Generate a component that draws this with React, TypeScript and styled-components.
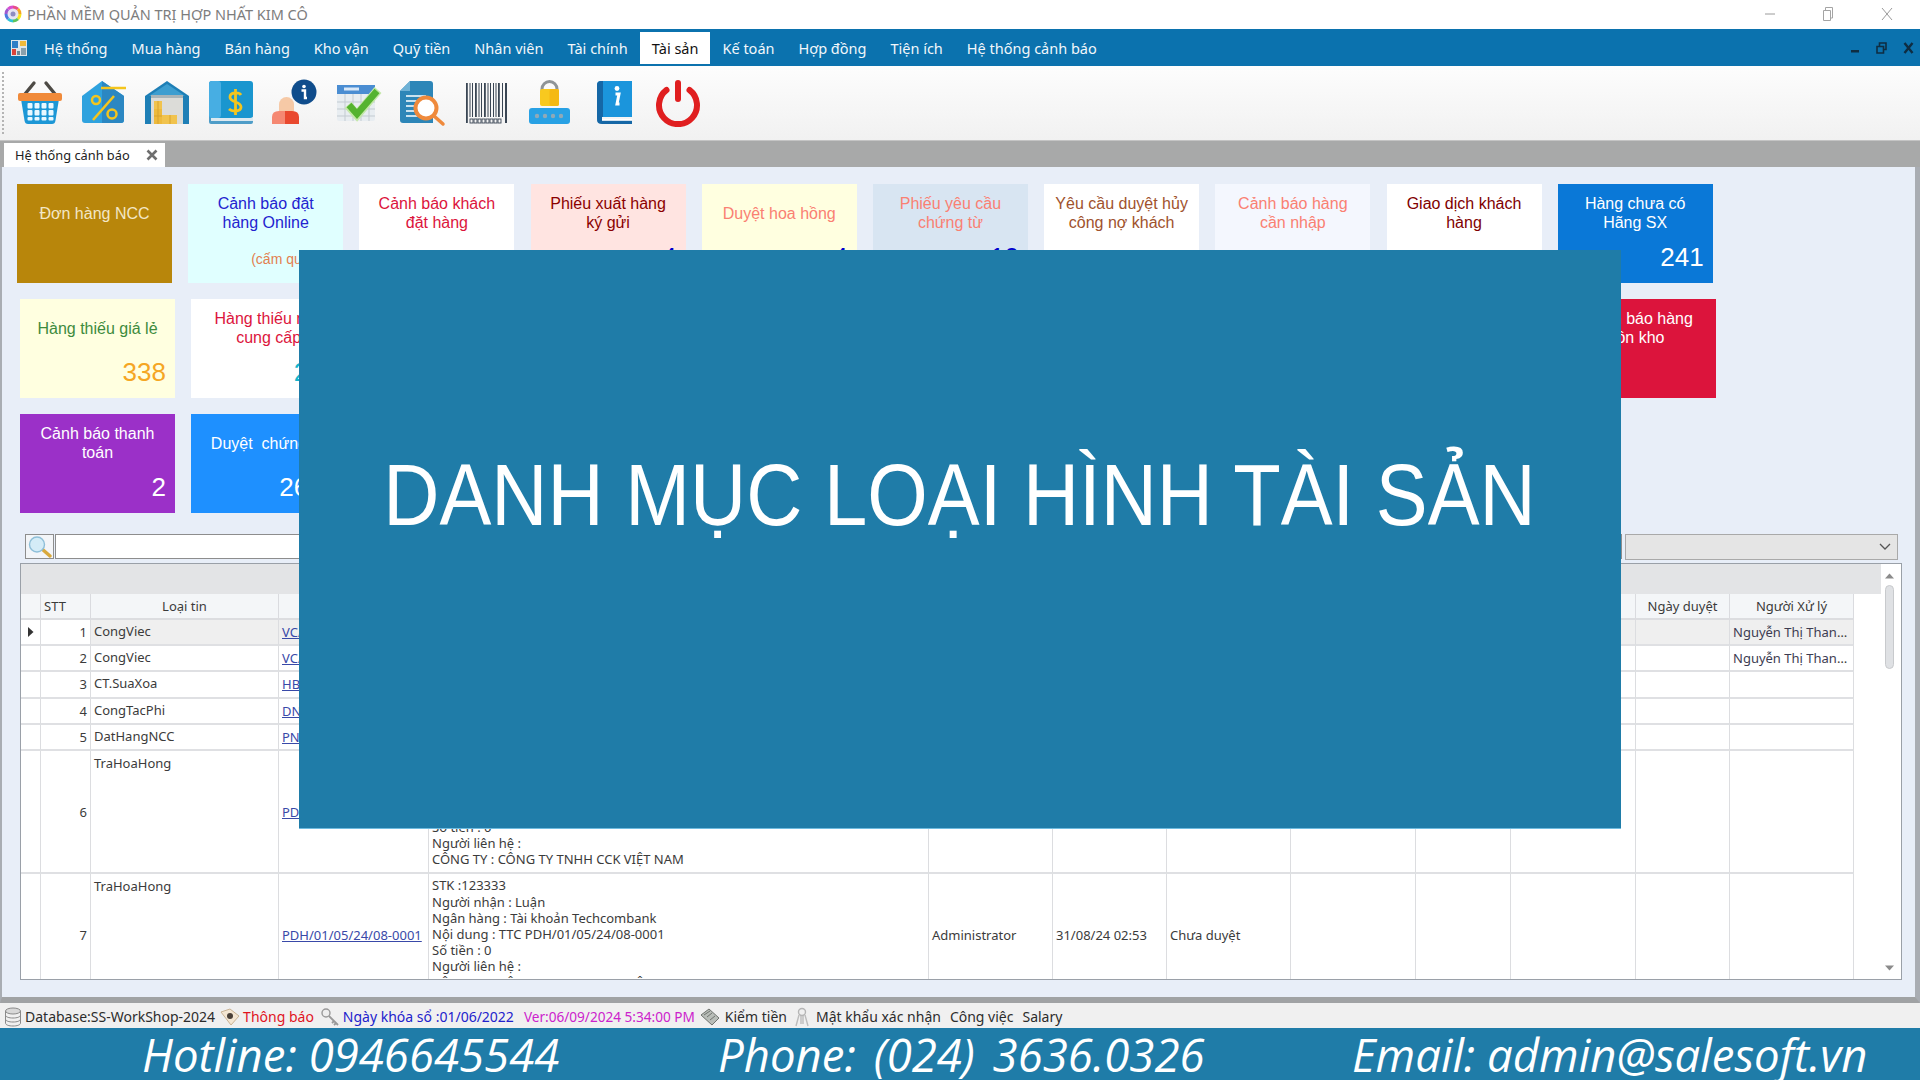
import React from "react";
import styled, { createGlobalStyle } from "styled-components";

const Global = createGlobalStyle`
  html, body { margin: 0; padding: 0; background: #fff; overflow: hidden; }
  * { box-sizing: border-box; }
`;

const Page = styled.div`
  position: relative;
  width: 1920px;
  height: 1080px;
  overflow: hidden;
  display: flex;
  flex-direction: column;
  font-family: "Noto Sans", "Liberation Sans", sans-serif;
`;

const TitleBar = styled.div`
  height: 29px;
  flex: none;
  background: #fff;
  display: flex;
  align-items: center;
  padding: 0 0 2px 4px;
  color: #7d7d7d;
  font-size: 14.5px;
`;
const TitleText = styled.span`
  margin-left: 5px;
  flex: 1;
`;
const WinButtons = styled.div`
  display: flex;
  align-items: center;
  gap: 46px;
  padding-right: 26px;
`;

const MenuBar = styled.nav`
  height: 37px;
  flex: none;
  background: #0b72ae;
  display: flex;
  align-items: center;
  padding: 0 6px 0 10px;
`;
const MenuItem = styled.div<{ $active?: boolean }>`
  height: 32px;
  margin-top: 1px;
  display: flex;
  align-items: center;
  padding: 0 12px;
  font-size: 14.5px;
  color: ${(p) => (p.$active ? "#111" : "#f2f7fb")};
  background: ${(p) => (p.$active ? "#fff" : "transparent")};
`;
const MenuLogo = styled.div`
  width: 18px;
  height: 18px;
  margin-right: 4px;
  flex: none;
`;
const MenuSpacer = styled.div`
  flex: 1;
`;
const MdiButtons = styled.div`
  display: flex;
  gap: 16px;
  align-items: center;
`;

const Toolbar = styled.div`
  height: 75px;
  flex: none;
  background: linear-gradient(#fdfdfd, #f1f1f1);
  border-bottom: 1px solid #c4c4c4;
  display: flex;
  align-items: center;
  padding-left: 2px;
`;
const Grip = styled.div`
  width: 2px;
  height: 62px;
  margin-right: 4px;
  border-left: 2px dotted #b4b4b4;
`;
const ToolButton = styled.div`
  width: 63.8px;
  display: flex;
  justify-content: center;
  flex: none;
`;

const TabStrip = styled.div`
  height: 26px;
  flex: none;
  background: #a8a9a9;
  padding: 2px 0 0 4px;
  display: flex;
`;
const Tab = styled.div`
  width: 161px;
  background: #fff;
  display: flex;
  align-items: center;
  justify-content: space-between;
  padding: 0 7px 0 11px;
  font-size: 12.8px;
  color: #222;
`;

const Content = styled.main`
  flex: 1;
  min-height: 0;
  background: #e8eef8;
  border-left: 2px solid #a9adb3;
  border-right: 5px solid #a9adb3;
  border-bottom: 6px solid #a0a2a4;
  padding-top: 17px;
  display: flex;
  flex-direction: column;
`;
const TileRow = styled.div<{ $left: number }>`
  display: grid;
  grid-template-columns: repeat(10, 155px);
  column-gap: 16.2px;
  margin-left: ${(p) => p.$left}px;
  margin-bottom: 16px;
  height: 99px;
`;
const Tile = styled.div<{ $bg: string; $fg: string; $col?: number }>`
  position: relative;
  background: ${(p) => p.$bg};
  color: ${(p) => p.$fg};
  grid-column: ${(p) => p.$col ?? "auto"};
  font-family: "Liberation Sans", Arial, sans-serif;
  font-size: 16px;
  line-height: 19px;
  text-align: center;
  display: flex;
  flex-direction: column;
`;
const TileTitle = styled.div`
  height: 58px;
  padding: 0 4px;
  display: flex;
  align-items: center;
  justify-content: center;
  white-space: pre-line;
`;
const TileValue = styled.div<{ $fg: string }>`
  color: ${(p) => p.$fg};
  font-size: 26px;
  line-height: 30px;
  text-align: right;
  padding-right: 9px;
`;
const TileNote = styled.div`
  color: #e2804f;
  font-size: 14px;
  line-height: 18px;
  text-align: left;
  white-space: nowrap;
  padding-left: 63px;
  margin-top: 8px;
`;

const SearchRow = styled.div`
  height: 26px;
  margin: 5px 17px 3px 23px;
  display: flex;
  gap: 1px;
`;
const SearchButton = styled.div`
  width: 29px;
  height: 25px;
  border: 1px solid #8d8d8d;
  background: #f3f5f8;
  flex: none;
  display: flex;
  align-items: center;
  justify-content: center;
`;
const SearchInput = styled.div`
  flex: 1;
  height: 25px;
  border: 1px solid #8d8d8d;
  background: #fff;
`;
const Combo = styled.div`
  width: 273px;
  margin-left: 2px;
  flex: none;
  background: #e5e5e5;
  border: 1px solid #a9a9a9;
  display: flex;
  align-items: center;
  justify-content: flex-end;
  padding-right: 5px;
`;

const GridBox = styled.section`
  height: 417px;
  margin: 0 13px 0 18px;
  border: 1px solid #9aa0a8;
  background: #fff;
  display: flex;
  overflow: hidden;
`;
const GridBody = styled.div`
  flex: 1;
  min-width: 0;
  overflow: hidden;
`;
const GroupPanel = styled.div`
  height: 30px;
  background: #e3e4e6;
`;
const Table = styled.table`
  table-layout: fixed;
  border-collapse: separate;
  border-spacing: 0;
  width: 1833px;
  font-size: 13px;
  color: #3b3b3b;
`;
const Th = styled.th`
  height: 26px;
  padding: 0 3px;
  font-weight: 400;
  text-align: center;
  background: #f4f6f8;
  border-right: 1px solid #dadbdf;
  border-bottom: 2px solid #dcdde0;
  overflow: hidden;
  white-space: nowrap;
`;
const ThLeft = styled(Th)`
  text-align: left;
`;
const Td = styled.td<{ $sel?: boolean }>`
  height: 26.2px;
  padding: 0 3px;
  background: ${(p) => (p.$sel ? "#efefef" : "#fff")};
  border-right: 1px solid #dcdde0;
  border-bottom: 2px solid #dfe0e3;
  overflow: hidden;
  white-space: nowrap;
  text-overflow: ellipsis;
  vertical-align: middle;
`;
const TdIndicator = styled(Td)`
  padding: 0 0 0 7px;
  background: #fff;
`;
const TdNumber = styled(Td)`
  text-align: right;
  background: #fff;
`;
const TdName = styled(Td)<{ $tall?: boolean }>`
  vertical-align: top;
  padding-top: ${(p) => (p.$tall ? 3 : 2)}px;
`;
const TdLines = styled(Td)`
  vertical-align: top;
`;
const Lines = styled.div`
  line-height: 16.2px;
  white-space: pre-line;
  padding: 3px 0 5px;
`;
const CellLink = styled.a`
  color: #3949a8;
  text-decoration: underline;
`;
const Person = styled.span`
  color: #3c3c52;
`;

const Scrollbar = styled.div`
  width: 20px;
  flex: none;
  background: #fff;
  display: flex;
  flex-direction: column;
  align-items: center;
  padding: 9px 4px 0 0;
`;
const ScrollThumb = styled.div`
  width: 9px;
  height: 84px;
  margin-top: 6px;
  background: #dfe1e4;
  border: 1px solid #c8cacd;
  border-radius: 5px;
  flex: none;
`;
const ScrollGap = styled.div`
  flex: 1;
`;
const ScrollDown = styled.div`
  margin-bottom: 8px;
  line-height: 0;
`;

const StatusBar = styled.div`
  height: 25px;
  flex: none;
  background: #f0f0f0;
  display: flex;
  align-items: center;
  padding: 2px 0 0 4px;
  font-size: 14px;
  white-space: nowrap;
`;
const StatusItem = styled.span<{ $fg?: string; $gap?: number; $size?: number }>`
  color: ${(p) => p.$fg ?? "#2c2c2c"};
  margin-right: ${(p) => p.$gap ?? 5}px;
  font-size: ${(p) => p.$size ?? 14}px;
  display: inline-flex;
  align-items: center;
`;
const SmallIcon = styled.span<{ $mr?: number }>`
  display: inline-flex;
  margin-right: ${(p) => p.$mr ?? 3}px;
  flex: none;
`;

const Footer = styled.footer`
  height: 52px;
  flex: none;
  background: #1f7ca8;
  color: #fff;
  font-size: 45.5px;
  font-style: italic;
  font-family: "Open Sans", "Noto Sans", sans-serif;
  display: flex;
  align-items: center;
  padding-left: 142px;
  white-space: nowrap;
`;
const FooterItem = styled.span<{ $w: number; $ws?: number }>`
  width: ${(p) => p.$w}px;
  word-spacing: ${(p) => p.$ws ?? 0}px;
  flex: none;
`;

const Overlay = styled.div`
  position: absolute;
  left: 299px;
  top: 250px;
  width: 1322px;
  height: 579px;
  background: #1f7ca8;
  color: #fff;
  font-family: "Liberation Sans", Arial, sans-serif;
  font-size: 87px;
  display: flex;
  align-items: center;
  justify-content: center;
  white-space: nowrap;
  padding-bottom: 88px;
  border-bottom: 1px solid #6fbbdf;
`;
const OverlayTitle = styled.span`
  display: inline-block;
  transform: scaleX(0.894);
`;

/* ---------- icons ---------- */
const Svg = ({ s = 48, children }: { s?: number; children: React.ReactNode }) => (
  <svg width={s} height={s} viewBox={`0 0 ${s} ${s}`} style={{ display: "block" }}>
    {children}
  </svg>
);

const Basket = () => (
  <Svg>
    <path d="M18 4L9 15M30 4l9 11" stroke="#4d4a45" strokeWidth="3.4" strokeLinecap="round" />
    <path d="M5 20h38l-3.600 22q-.5 3-3.400 3H12q-2.900 0-3.400-3z" fill="#1c97d6" />
    <rect x="2" y="14" width="44" height="8" rx="2" fill="#f08a3a" />
    {[24, 31, 38].map((y) =>
      [11.5, 18.5, 25.5, 32.5].map((x) => (
        <rect key={`${x}-${y}`} x={x} y={y} width="5" height={y === 38 ? 3.5 : 5.5} rx="1" fill="#e9f8ff" />
      ))
    )}
  </Svg>
);
const TagIcon = () => (
  <Svg>
    <path d="M2 17L22 2l22 15v24q0 3-3 3H5q-3 0-3-3z" fill="#2fa2de" />
    <path d="M22 2l22 15v24q0 3-3 3H22z" fill="#2b87c2" />
    <path d="M21 9h25" stroke="#f4c51d" strokeWidth="2.5" />
    <circle cx="16" cy="21" r="4" fill="none" stroke="#f4c51d" strokeWidth="2.5" />
    <circle cx="32" cy="35" r="4.5" fill="none" stroke="#f4c51d" strokeWidth="2.5" />
    <path d="M34 17L13 41" stroke="#f4c51d" strokeWidth="2.5" />
  </Svg>
);
const Warehouse = () => (
  <Svg>
    <path d="M2 17L24 2l22 15v28H2z" fill="#1e7fb6" />
    <path d="M6 17L24 5l18 12z" fill="#3d9ed0" />
    <rect x="8" y="16" width="32" height="29" fill="#dcdcd8" />
    <rect x="8" y="16" width="32" height="3" fill="#a9b4b8" />
    <rect x="11" y="22" width="8" height="8" fill="#f1c34d" />
    <rect x="11" y="30" width="8" height="15" fill="#eeba3c" />
    <rect x="19" y="36" width="15" height="9" fill="#f1c34d" />
    <path d="M15 22v23M27 36v9M11 37h8" stroke="#d7a22e" strokeWidth="1" />
  </Svg>
);
const BookMoney = () => (
  <Svg>
    <rect x="2" y="36" width="44" height="9" rx="2" fill="#4f9dc8" />
    <rect x="4" y="38" width="42" height="4" fill="#dce9f0" />
    <rect x="2" y="2" width="44" height="37" rx="3" fill="#1a96cf" />
    <rect x="2" y="2" width="12" height="37" rx="3" fill="#47aee3" />
    <path d="M34 16c-2-3-11-3-11 2 0 6 11 4 11 10 0 5-9 5-12 2M28.5 10v26" fill="none" stroke="#f4c51d" strokeWidth="2.800" />
  </Svg>
);
const PersonInfo = () => (
  <Svg>
    <rect x="8" y="18" width="15" height="21" rx="7.5" fill="#f6c9a6" />
    <path d="M1 45v-7q0-6 7-6h6v13z" fill="#f58872" />
    <path d="M14 32h7q7 0 7 6v7H14z" fill="#e9492f" />
    <circle cx="33" cy="13" r="12.5" fill="#104d8c" />
    <circle cx="33" cy="7.5" r="1.800" fill="#fff" />
    <path d="M30.5 11.5h3.500v7.500h2" fill="none" stroke="#fff" strokeWidth="2.400" />
  </Svg>
);
const CalendarCheck = () => (
  <Svg>
    <rect x="2" y="6" width="38" height="36" rx="2" fill="#e8edf1" />
    <rect x="2" y="6" width="38" height="9" fill="#4a8dd2" />
    <rect x="9" y="8.5" width="15" height="3" fill="#d9e8f7" />
    <path d="M2 23h38M2 30h38M2 37h38M10 15v27M18 15v27M26 15v27M34 15v27" stroke="#c3cbd1" strokeWidth="1" />
    <path d="M13 26l9 10L43 11" fill="none" stroke="#c4e8a8" strokeWidth="9" />
    <path d="M14 26l8 9L42 12" fill="none" stroke="#55b330" strokeWidth="6.500" />
  </Svg>
);
const DocSearch = () => (
  <Svg>
    <path d="M1 12L11 2h20q3 0 3 3v39H4q-3 0-3-3z" fill="#2d86b8" />
    <path d="M1 12L11 2v10z" fill="#6fb2d6" />
    <path d="M7 17h20M7 22h14M7 27h12M7 32h12M7 37h14" stroke="#c9e2ef" strokeWidth="1.800" />
    <circle cx="27" cy="29" r="10.5" fill="#fff" stroke="#ef8a3c" strokeWidth="4" />
    <path d="M35 37l9 8" stroke="#ef8a3c" strokeWidth="3.500" strokeLinecap="round" />
  </Svg>
);
const Barcode = () => {
  const bars: [number, number][] = [
    [4, 1.8], [7.5, 1], [10, 1], [13, 1.8], [16.5, 1], [19, 1], [22, 1.8], [25.5, 1],
    [28, 1], [31, 1], [33.5, 1], [36, 1.8], [40, 1], [43, 2],
  ];
  return (
    <Svg>
      {bars.map(([x, w], i) => (
        <rect key={x} x={x} y="4" width={w} height={i === 0 || i === 13 ? 40 : 34} fill="#3a4654" />
      ))}
      {[8, 12, 16, 20, 24, 28, 32, 36].map((x) => (
        <rect key={x} x={x} y="40" width="3" height="4" fill="none" stroke="#3a4654" strokeWidth="0.900" />
      ))}
    </Svg>
  );
};
const LockIcon = () => (
  <Svg>
    <path d="M16 13V10a7.5 7.5 0 0 1 15 0v3" fill="none" stroke="#8f9497" strokeWidth="3" />
    <rect x="14" y="10" width="19" height="17" rx="2" fill="#f8c91f" />
    <rect x="23.5" y="10" width="9.5" height="17" rx="2" fill="#f5b912" />
    <rect x="3" y="29" width="41" height="16" rx="3" fill="#28a1e4" />
    {[11, 19, 27, 35].map((x) => (
      <circle key={x} cx={x} cy="37" r="2.200" fill="#8fa9b8" />
    ))}
  </Svg>
);
const BookInfo = () => (
  <Svg>
    <path d="M7 6q0-4 4-4h31v36H12q-5 0-5 4z" fill="#1b95dc" />
    <path d="M7 6q0-4 4-4h2v36h-1q-5 0-5 4z" fill="#1567a6" />
    <path d="M7 41q0-4 5-4v3h30v5H12q-5 0-5-4z" fill="#1567a6" />
    <rect x="12" y="40" width="30" height="1.800" fill="#fff" />
    <circle cx="27" cy="9.5" r="2.400" fill="#fff" />
    <path d="M25.5 15h3.500l-2 10h2.500" fill="none" stroke="#fff" strokeWidth="3" />
  </Svg>
);
const Power = () => (
  <Svg>
    <path d="M12.5 11A19 19 0 1 0 35.5 11" fill="none" stroke="#e01f20" strokeWidth="6" strokeLinecap="round" />
    <path d="M24 4v16" stroke="#e01f20" strokeWidth="6" strokeLinecap="round" />
  </Svg>
);

const AppLogo = () => (
  <svg width="18" height="18" viewBox="0 0 18 18">
    {["#e84d8a", "#f5a623", "#f8e71c", "#5cc45c", "#2ec4d6", "#4a7be0", "#9b59d0", "#d84dd0"].map((c, i) => (
      <path key={c} d="M9 0.500a8.500 8.500 0 0 1 6 2.500L9 9z" fill={c} transform={`rotate(${i * 45} 9 9)`} />
    ))}
    <circle cx="9" cy="9" r="5.500" fill="#e6e4f2" />
    <circle cx="9" cy="9" r="2.500" fill="#8e8cc0" />
  </svg>
);
const MenuGlyph = () => (
  <svg width="18" height="18" viewBox="0 0 18 18" style={{ display: "block" }}>
    <rect x="1" y="1" width="16" height="16" fill="#dfe6ea" />
    <rect x="2" y="2" width="6" height="7" fill="#2f7ec6" />
    <rect x="10" y="2" width="6" height="5" fill="#f0b93a" />
    <rect x="2" y="10" width="4" height="6" fill="#d9443a" />
    <rect x="7" y="12" width="3" height="4" fill="#6d8a98" />
    <rect x="11" y="9" width="5" height="7" fill="#8aa0ac" />
  </svg>
);
const WinMin = () => (
  <svg width="12" height="12" viewBox="0 0 12 12"><path d="M1 6h10" stroke="#9a9a9a" /></svg>
);
const WinRestore = () => (
  <svg width="12" height="14" viewBox="0 0 12 14">
    <path d="M1.500 3.500h7v10h-7zM3.500 3V.5h7V11H9" fill="none" stroke="#a4a4a4" />
  </svg>
);
const WinClose = () => (
  <svg width="14" height="14" viewBox="0 0 14 14"><path d="M2 1l10 12M12 1L2 13" stroke="#9a9a9a" /></svg>
);
const MdiMin = () => (
  <svg width="9" height="10" viewBox="0 0 9 10"><rect x="0" y="7" width="8" height="2.500" fill="#0f2d42" /></svg>
);
const MdiRestore = () => (
  <svg width="11" height="12" viewBox="0 0 11 12">
    <path d="M1 4.500h6.500v6.500H1zM3.500 4V1H10v6.500H8" fill="none" stroke="#0f2d42" strokeWidth="1.600" />
  </svg>
);
const MdiClose = () => (
  <svg width="11" height="12" viewBox="0 0 11 12"><path d="M1.500 1l8 10M9.500 1l-8 10" stroke="#0f2d42" strokeWidth="2.400" /></svg>
);
const TabClose = () => (
  <svg width="12" height="12" viewBox="0 0 12 12"><path d="M1.500 1.500l9 9M10.500 1.500l-9 9" stroke="#6e6e6e" strokeWidth="2.600" /></svg>
);
const Magnifier = () => (
  <svg width="26" height="22" viewBox="0 0 26 22">
    <path d="M15 13l8 7" stroke="#d9a93c" strokeWidth="3.400" strokeLinecap="round" />
    <circle cx="10" cy="8.500" r="7.500" fill="#d4ecf7" stroke="#8fbfd8" strokeWidth="1.400" />
  </svg>
);
const Chevron = () => (
  <svg width="14" height="10" viewBox="0 0 14 10"><path d="M2 2l5 5 5-5" fill="none" stroke="#555" strokeWidth="1.300" /></svg>
);
const ArrowUp = () => (
  <svg width="9" height="6" viewBox="0 0 9 6" style={{ flex: "none" }}><path d="M4.500 0.500L9 5.500H0z" fill="#8b8b8b" /></svg>
);
const ArrowDown = () => (
  <svg width="9" height="6" viewBox="0 0 9 6"><path d="M4.500 5.500L9 0.500H0z" fill="#8b8b8b" /></svg>
);
const RowMark = () => (
  <svg width="6" height="10" viewBox="0 0 6 10"><path d="M0 0l5.500 5L0 10z" fill="#333" /></svg>
);
const DbIcon = () => (
  <svg width="18" height="20" viewBox="0 0 18 20">
    <ellipse cx="9" cy="4" rx="7.500" ry="3" fill="#d8d8d8" stroke="#8a8a8a" />
    <path d="M1.500 4v12c0 2 3.500 3 7.500 3s7.500-1 7.500-3V4M1.500 8c0 2 3.500 3 7.500 3s7.500-1 7.500-3M1.500 12c0 2 3.500 3 7.500 3s7.500-1 7.500-3" fill="none" stroke="#8a8a8a" />
  </svg>
);
const NoticeIcon = () => (
  <svg width="20" height="20" viewBox="0 0 20 20">
    <path d="M1 5l9-3 9 7-8 9z" fill="#f4e6d2" stroke="#c9b394" />
    <circle cx="10" cy="9" r="3" fill="#4a4038" />
  </svg>
);
const KeyIcon = () => (
  <svg width="20" height="20" viewBox="0 0 20 20">
    <circle cx="6" cy="6" r="4" fill="#eee" stroke="#999" strokeWidth="1.400" />
    <path d="M9 9l9 9M14 14l-2 2M16 16l-2 2" stroke="#999" strokeWidth="1.800" />
  </svg>
);
const CashIcon = () => (
  <svg width="20" height="20" viewBox="0 0 20 20">
    <path d="M1 8l8-6 10 9-7 7z" fill="#b8bdb8" stroke="#6f736f" />
    <path d="M4 8l6-4M7 10l5-4M10 13l5-4" stroke="#6f736f" />
  </svg>
);
const PassIcon = () => (
  <svg width="14" height="20" viewBox="0 0 14 20">
    <circle cx="7" cy="5" r="3.500" fill="none" stroke="#b5b5b5" strokeWidth="1.400" />
    <path d="M4 8L1 19M10 8l3 11M6 9v8M8 9v8" stroke="#bcbcbc" strokeWidth="1.400" />
  </svg>
);

/* ---------- data ---------- */
const tools = [Basket, TagIcon, Warehouse, BookMoney, PersonInfo, CalendarCheck, DocSearch, Barcode, LockIcon, BookInfo, Power];
const menus = ["Hệ thống", "Mua hàng", "Bán hàng", "Kho vận", "Quỹ tiền", "Nhân viên", "Tài chính", "Tài sản", "Kế toán", "Hợp đồng", "Tiện ích", "Hệ thống cảnh báo"];

type TileData = { t: string; bg: string; fg: string; v?: string; vc?: string; note?: string; col?: number };
const row1: TileData[] = [
  { t: "Đơn hàng NCC", bg: "#b8860b", fg: "#f3e7c6" },
  { t: "Cảnh báo đặt\nhàng Online", bg: "#e0ffff", fg: "#2323cf", note: "(cấm qua ngày)" },
  { t: "Cảnh báo khách\nđặt hàng", bg: "#ffffff", fg: "#dc143c" },
  { t: "Phiếu xuất hàng\nký gửi", bg: "#ffe4e1", fg: "#8b0000", v: "4", vc: "#0000cd" },
  { t: "Duyệt hoa hồng", bg: "#ffffe0", fg: "#fa8072", v: "4", vc: "#0000cd" },
  { t: "Phiếu yêu cầu\nchứng từ", bg: "#d8e5f2", fg: "#fa8072", v: "10", vc: "#0000cd" },
  { t: "Yêu cầu duyệt hủy\ncông nợ khách", bg: "#ffffff", fg: "#a0522d" },
  { t: "Cảnh báo hàng\ncần nhập", bg: "#f4f7fe", fg: "#fa8072" },
  { t: "Giao dịch khách\nhàng", bg: "#ffffff", fg: "#800000" },
  { t: "Hàng chưa có\nHãng SX", bg: "#0a78d7", fg: "#fff", v: "241", vc: "#fff" },
];
const row2: TileData[] = [
  { t: "Hàng thiếu giá lẻ", bg: "#ffffe0", fg: "#3d8b3d", v: "338", vc: "#f5a623" },
  { t: "Hàng thiếu nhà\ncung cấp", bg: "#ffffff", fg: "#dc143c", v: "215", vc: "#12b5cb" },
  { t: "Cảnh báo hàng\ntồn kho", bg: "#dc143c", fg: "#fff", col: 10 },
];
const row3: TileData[] = [
  { t: "Cảnh báo thanh\ntoán", bg: "#9b30c8", fg: "#fff", v: "2", vc: "#fff" },
  { t: "Duyệt\u00a0 chứng từ", bg: "#1e90ff", fg: "#fff", v: "2612", vc: "#fff" },
];

const widths = [20, 50, 188, 150, 500, 124, 114, 124, 125, 95, 125, 94, 124];
const heads = ["", "STT", "Loại tin", "Số chứng từ", "Nội dung", "Người tạo", "Ngày tạo", "Trạng thái", "Người duyệt", "Cấp duyệt", "Ghi chú", "Ngày duyệt", "Người Xử lý"];

const simple = [
  ["CongViec", "VC/01/08/24-0001", "Nguyễn Thị Thanh Hà"],
  ["CongViec", "VC/01/08/24-0002", "Nguyễn Thị Thanh Hà"],
  ["CT.SuaXoa", "HBL/01/08/24-0003", ""],
  ["CongTacPhi", "DNT/01/08/24-0001", ""],
  ["DatHangNCC", "PNK/01/08/24-0001", ""],
];
const bank = `STK :123333
Người nhận : Luận
Ngân hàng : Tài khoản Techcombank
Nội dung : TTC PDH/01/05/24/08-0001
Số tiền : 0
Người liên hệ :
CÔNG TY : CÔNG TY TNHH CCK VIỆT NAM`;

const renderTile = (d: TileData) => (
  <Tile key={d.t} $bg={d.bg} $fg={d.fg} $col={d.col}>
    <TileTitle>{d.t}</TileTitle>
    {d.note && <TileNote>{d.note}</TileNote>}
    {d.v && <TileValue $fg={d.vc ?? d.fg}>{d.v}</TileValue>}
  </Tile>
);

export default function App() {
  return (
    <Page>
      <Global />
      <TitleBar>
        <AppLogo />
        <TitleText>PHẦN MỀM QUẢN TRỊ HỢP NHẤT KIM CÔ</TitleText>
        <WinButtons>
          <WinMin />
          <WinRestore />
          <WinClose />
        </WinButtons>
      </TitleBar>
      <MenuBar>
        <MenuLogo>
          <MenuGlyph />
        </MenuLogo>
        {menus.map((m) => (
          <MenuItem key={m} $active={m === "Tài sản"}>
            {m}
          </MenuItem>
        ))}
        <MenuSpacer />
        <MdiButtons>
          <MdiMin />
          <MdiRestore />
          <MdiClose />
        </MdiButtons>
      </MenuBar>
      <Toolbar>
        <Grip />
        {tools.map((T, i) => (
          <ToolButton key={i}>
            <T />
          </ToolButton>
        ))}
      </Toolbar>
      <TabStrip>
        <Tab>
          Hệ thống cảnh báo
          <TabClose />
        </Tab>
      </TabStrip>
      <Content>
        <TileRow $left={15}>{row1.map(renderTile)}</TileRow>
        <TileRow $left={18}>{row2.map(renderTile)}</TileRow>
        <TileRow $left={18}>{row3.map(renderTile)}</TileRow>
        <SearchRow>
          <SearchButton>
            <Magnifier />
          </SearchButton>
          <SearchInput />
          <Combo>
            <Chevron />
          </Combo>
        </SearchRow>
        <GridBox>
          <GridBody>
            <GroupPanel />
            <Table>
              <colgroup>
                {widths.map((w, i) => (
                  <col key={i} style={{ width: w }} />
                ))}
              </colgroup>
              <thead>
                <tr>
                  {heads.map((h, i) => (i === 1 ? <ThLeft key={i}>{h}</ThLeft> : <Th key={i}>{h}</Th>))}
                </tr>
              </thead>
              <tbody>
                {simple.map(([type, code, person], i) => (
                  <tr key={i}>
                    <TdIndicator>{i === 0 && <RowMark />}</TdIndicator>
                    <TdNumber>{i + 1}</TdNumber>
                    <TdName $sel={i === 0}>{type}</TdName>
                    <Td $sel={i === 0}>
                      <CellLink>{code}</CellLink>
                    </Td>
                    {widths.slice(4, 12).map((_, c) => (
                      <Td key={c} $sel={i === 0} />
                    ))}
                    <Td $sel={i === 0}>
                      <Person>{person}</Person>
                    </Td>
                  </tr>
                ))}
                {[6, 7].map((n) => (
                  <tr key={n}>
                    <TdIndicator />
                    <TdNumber>{n}</TdNumber>
                    <TdName $tall>TraHoaHong</TdName>
                    <Td>
                      <CellLink>PDH/01/05/24/08-0001</CellLink>
                    </Td>
                    <TdLines>
                      <Lines>{bank}</Lines>
                    </TdLines>
                    <Td>Administrator</Td>
                    <Td>31/08/24 02:53</Td>
                    <Td>Chưa duyệt</Td>
                    {widths.slice(8).map((_, c) => (
                      <Td key={c} />
                    ))}
                  </tr>
                ))}
              </tbody>
            </Table>
          </GridBody>
          <Scrollbar>
            <ArrowUp />
            <ScrollThumb />
            <ScrollGap />
            <ScrollDown>
              <ArrowDown />
            </ScrollDown>
          </Scrollbar>
        </GridBox>
      </Content>
      <StatusBar>
        <StatusItem>
          <SmallIcon><DbIcon /></SmallIcon>Database:SS-WorkShop-2024
        </StatusItem>
        <StatusItem $fg="#e0141e" $gap={6}>
          <SmallIcon><NoticeIcon /></SmallIcon>Thông báo
        </StatusItem>
        <StatusItem $fg="#2222cc" $gap={10}>
          <SmallIcon><KeyIcon /></SmallIcon>Ngày khóa sổ :01/06/2022
        </StatusItem>
        <StatusItem $fg="#cc22cc" $size={13.6}>Ver:06/09/2024 5:34:00 PM</StatusItem>
        <StatusItem $gap={8}>
          <SmallIcon $mr={5}><CashIcon /></SmallIcon>Kiểm tiền
        </StatusItem>
        <StatusItem $gap={9}>
          <SmallIcon $mr={7}><PassIcon /></SmallIcon>Mật khẩu xác nhận
        </StatusItem>
        <StatusItem $gap={9}>Công việc</StatusItem>
        <StatusItem>Salary</StatusItem>
      </StatusBar>
      <Footer>
        <FooterItem $w={576}>Hotline: 0946645544</FooterItem>
        <FooterItem $w={634} $ws={6}>Phone: (024) 3636.0326</FooterItem>
        <FooterItem $w={520}>Email: admin@salesoft.vn</FooterItem>
      </Footer>
      <Overlay>
        <OverlayTitle>DANH MỤC LOẠI HÌNH TÀI SẢN</OverlayTitle>
      </Overlay>
    </Page>
  );
}
